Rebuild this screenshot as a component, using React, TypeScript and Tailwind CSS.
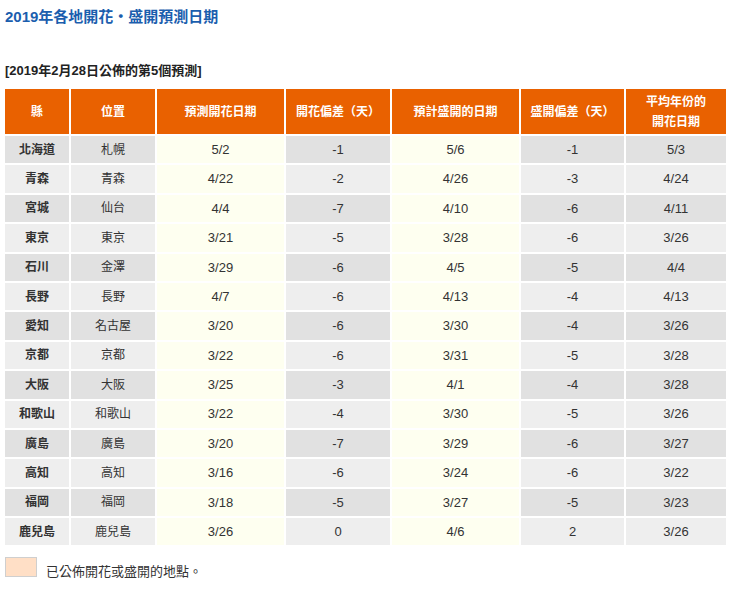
import React from "react";

const rows: string[][] = [
  ["北海道","札幌","5/2","-1","5/6","-1","5/3"],
  ["青森","青森","4/22","-2","4/26","-3","4/24"],
  ["宮城","仙台","4/4","-7","4/10","-6","4/11"],
  ["東京","東京","3/21","-5","3/28","-6","3/26"],
  ["石川","金澤","3/29","-6","4/5","-5","4/4"],
  ["長野","長野","4/7","-6","4/13","-4","4/13"],
  ["愛知","名古屋","3/20","-6","3/30","-4","3/26"],
  ["京都","京都","3/22","-6","3/31","-5","3/28"],
  ["大阪","大阪","3/25","-3","4/1","-4","3/28"],
  ["和歌山","和歌山","3/22","-4","3/30","-5","3/26"],
  ["廣島","廣島","3/20","-7","3/29","-6","3/27"],
  ["高知","高知","3/16","-6","3/24","-6","3/22"],
  ["福岡","福岡","3/18","-5","3/27","-5","3/23"],
  ["鹿兒島","鹿兒島","3/26","0","4/6","2","3/26"],
];
const widths = ["w-[65px]","w-[86px]","w-[129px]","w-[106px]","w-[129px]","w-[105px]","w-[101px]"];
const heads = ["縣","位置","預測開花日期","開花偏差（天）","預計盛開的日期","盛開偏差（天）","平均年份的\n開花日期"];

export default function App() {
  return (
    <div className="w-[732px] h-[590px] bg-white px-[5px] pt-[6px] text-[#333]" style={{fontFamily:'"Liberation Sans","Noto Sans CJK TC",sans-serif'}}>
      <h1 className="text-[15px] font-bold text-[#1b5eae] leading-[22px]">2019年各地開花・盛開預測日期</h1>
      <div className="mt-[34px] text-[13px] font-bold leading-[18px] text-[#222]">[2019年2月28日公佈的第5個預測]</div>
      <table className="mt-[9px] border-collapse text-[13px] table-fixed w-[721px]">
        <thead>
          <tr className="h-[46px] bg-[#e96100]">
            {heads.map((h,i)=>(
              <th key={i} className={`${widths[i]} border-x-2 border-white first:border-l-0 last:border-r-0 text-white text-[12px] font-bold leading-[20px] whitespace-pre-line`}>{h}</th>
            ))}
          </tr>
        </thead>
        <tbody>
          {rows.map((r,ri)=>(
            <tr key={ri} className="h-[29.4px]">
              {r.map((c,ci)=>{
                const yellow = ci===2||ci===4;
                const bg = yellow ? "bg-[#fefff0]" : ri%2===0 ? "bg-[#e1e1e1]" : "bg-[#eeeeee]";
                return (
                  <td key={ci} className={`${bg} text-center border-2 border-white first:border-l-0 last:border-r-0 ${ci===0?"font-bold":""} ${ci<2?"text-[12px]":"text-[13px]"}`}>{c}</td>
                );
              })}
            </tr>
          ))}
        </tbody>
      </table>
      <div className="mt-[5px] flex items-center gap-[9px]">
        <div className="w-[32px] h-[20px] bg-[#ffdfc6] border border-[#cfcfcf]"></div>
        <span className="text-[13px] mt-[10px] text-[#333]">已公佈開花或盛開的地點。</span>
      </div>
    </div>
  );
}
